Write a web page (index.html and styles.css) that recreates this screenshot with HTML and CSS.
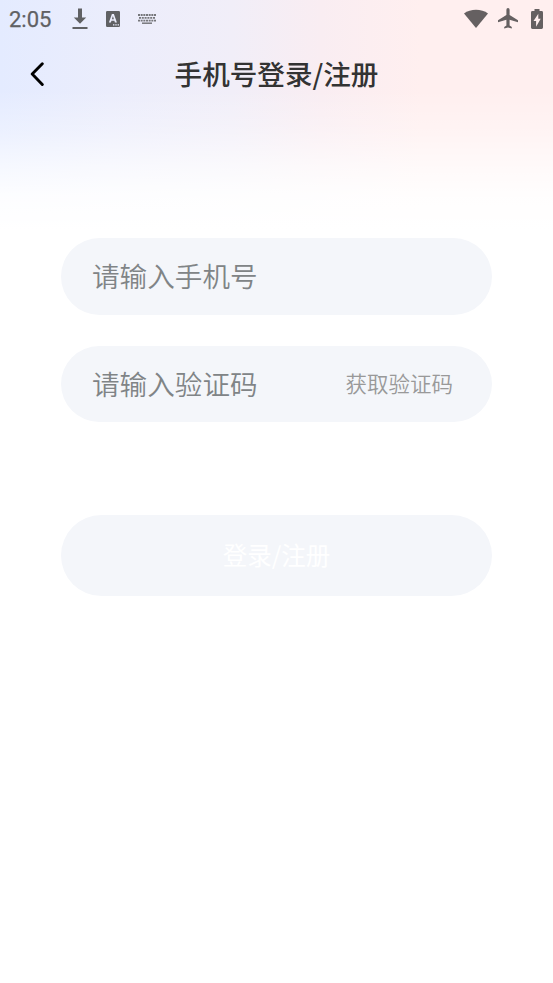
FILE: index.html
```html
<!DOCTYPE html>
<html lang="zh-CN">
<head>
<meta charset="utf-8">
<meta name="viewport" content="width=device-width, initial-scale=1">
<title>手机号登录/注册</title>
<link rel="stylesheet" href="styles.css">
</head>
<body>
<div class="screen">
  <div class="statusbar">
    <span class="clock">2:05</span>
    <svg class="ic-download" width="16" height="22" viewBox="0 0 16 22"><path d="M6 .5h4v9h4.200L8 15.700 1.800 9.500H6zM.5 18.900h15v2H.5z"/></svg>
    <svg class="ic-input" width="14" height="16" viewBox="0 0 14 16"><path fill-rule="evenodd" d="M1.200 0h11.600A1.200 1.200 0 0 1 14 1.200v13.600a1.200 1.200 0 0 1-1.200 1.200H1.200A1.200 1.200 0 0 1 0 14.800V1.200A1.200 1.200 0 0 1 1.200 0zM5.900 3 2.900 11.500h2l.5-1.700h3l.5 1.700h2L7.900 3zm1 2 1 3.300h-2zM7 13.200v1.400h1.400v-1.400zm2.300 0v1.400h1.400v-1.400zm2.300 0v1.400H13v-1.400z"/></svg>
    <svg class="ic-keyboard" width="18" height="10" viewBox="0 0 18 10"><g fill="none" stroke="#606164" stroke-opacity=".85" stroke-width="1.800"><path d="M0 1h18" stroke-dasharray="2 .67"/><path d="M1 3.900h16" stroke-dasharray="2 .8"/><path d="M0 6.700h18" stroke-dasharray="2 .67"/><path d="M4 9.200h10" stroke-width="1.500"/></g></svg>
    <div class="status-right">
      <svg width="24" height="20" viewBox="0 0 24 20"><path d="M0 4.500C6.500-.4 17.500-.4 24 4.500L12 19z"/></svg>
      <svg class="ic-plane" width="20" height="21" viewBox="0 0 20 21"><path d="M20 14.300v-2l-8.400-5.200V1.700a1.600 1.600 0 0 0-3.200 0v5.400L0 12.300v2l8.400-2.600v5.700l-2.200 1.600v1.500L10 19.400l3.800 1.100V19l-2.200-1.600v-5.700z"/></svg>
      <svg class="ic-battery" width="12" height="20" viewBox="0 0 12 20"><path fill-rule="evenodd" d="M3.500 0h5v2h2.100A1.400 1.400 0 0 1 12 3.400v15.200a1.400 1.400 0 0 1-1.400 1.400H1.400A1.400 1.400 0 0 1 0 18.600V3.400A1.400 1.400 0 0 1 1.400 2h2.100zM7.300 4.800l-4.800 7.200h2.600v5.700l4.600-7.900H7.300z"/></svg>
    </div>
  </div>
  <header class="navbar">
    <button class="back" aria-label="返回"><svg width="16" height="24" viewBox="0 0 16 24"><path d="M13.300 1.800 3.200 12.100 13.300 22.400" fill="none" stroke="#000" stroke-width="2.900" stroke-linecap="round" stroke-linejoin="round"/></svg></button>
    <h1 class="title">手机号登录/注册</h1>
  </header>
  <main class="form">
    <div class="field"><span class="placeholder">请输入手机号</span></div>
    <div class="field"><span class="placeholder">请输入验证码</span><span class="get-code">获取验证码</span></div>
    <button class="submit">登录/注册</button>
  </main>
</div>
</body>
</html>
```
FILE: styles.css
```css
* { box-sizing: border-box; }
body {
  margin: 0;
  background: #fff;
  font-family: "Noto Sans CJK SC", sans-serif;
}
.screen {
  height: 983px;
  overflow: hidden;
  background:
    linear-gradient(to bottom, rgba(255,255,255,0) 90px, rgba(255,255,255,.3) 132px, rgba(255,255,255,.65) 165px, rgba(255,255,255,.9) 195px, #fff 230px),
    linear-gradient(to right, #e4ebff 0%, #ebedfc 20%, #f1eef8 42%, #f9edf2 58%, #ffefef 76%, #ffefef 100%);
}
.statusbar {
  display: flex;
  align-items: center;
  height: 37px;
  padding: 0 10px 0 9px;
}
.statusbar svg { fill: #606164; flex: none; display: block; }
.clock {
  width: 63px;
  font: 400 22px/24px Roboto, sans-serif;
  color: #606164;
  -webkit-text-stroke: .25px #606164;
  margin-top: 2px;
}
.ic-download { margin-top: 1px; }
.ic-input { margin-left: 18px; }
.ic-keyboard { margin-left: 18px; }
.status-right {
  display: flex;
  align-items: center;
  margin-left: auto;
}
.statusbar .status-right svg { fill: #656061; }
.statusbar .ic-plane { margin-left: 10px; }
.statusbar .ic-battery { margin-left: 13px; }
.navbar {
  display: grid;
  grid-template-columns: 70px 1fr 70px;
  align-items: center;
  height: 74px;
}
.back {
  display: flex;
  padding: 0;
  margin-left: 29px;
  border: 0;
  background: none;
}
.title {
  margin: 0;
  padding-bottom: 2px;
  text-align: center;
  font-size: 27.600px;
  line-height: 40px;
  font-weight: 500;
  color: #333;
}
.form {
  display: flex;
  flex-direction: column;
  gap: 31px;
  padding: 127px 61px 0;
}
.field {
  display: flex;
  align-items: center;
  justify-content: space-between;
  height: 76.500px;
  padding: 0 39px 2px 31px;
  border-radius: 39px;
  background: #f4f6fa;
}
.placeholder { font-size: 27.600px; font-weight: 350; line-height: 40px; color: #808486; }
.get-code { font-size: 21.500px; font-weight: 350; line-height: 32px; color: #999; }
.submit {
  height: 81px;
  margin-top: 62px;
  padding: 0 0 1px;
  border: 0;
  border-radius: 41px;
  background: #f4f6fa;
  color: #fff;
  font: 400 24.500px/36px "Noto Sans CJK SC", sans-serif;
}
```
